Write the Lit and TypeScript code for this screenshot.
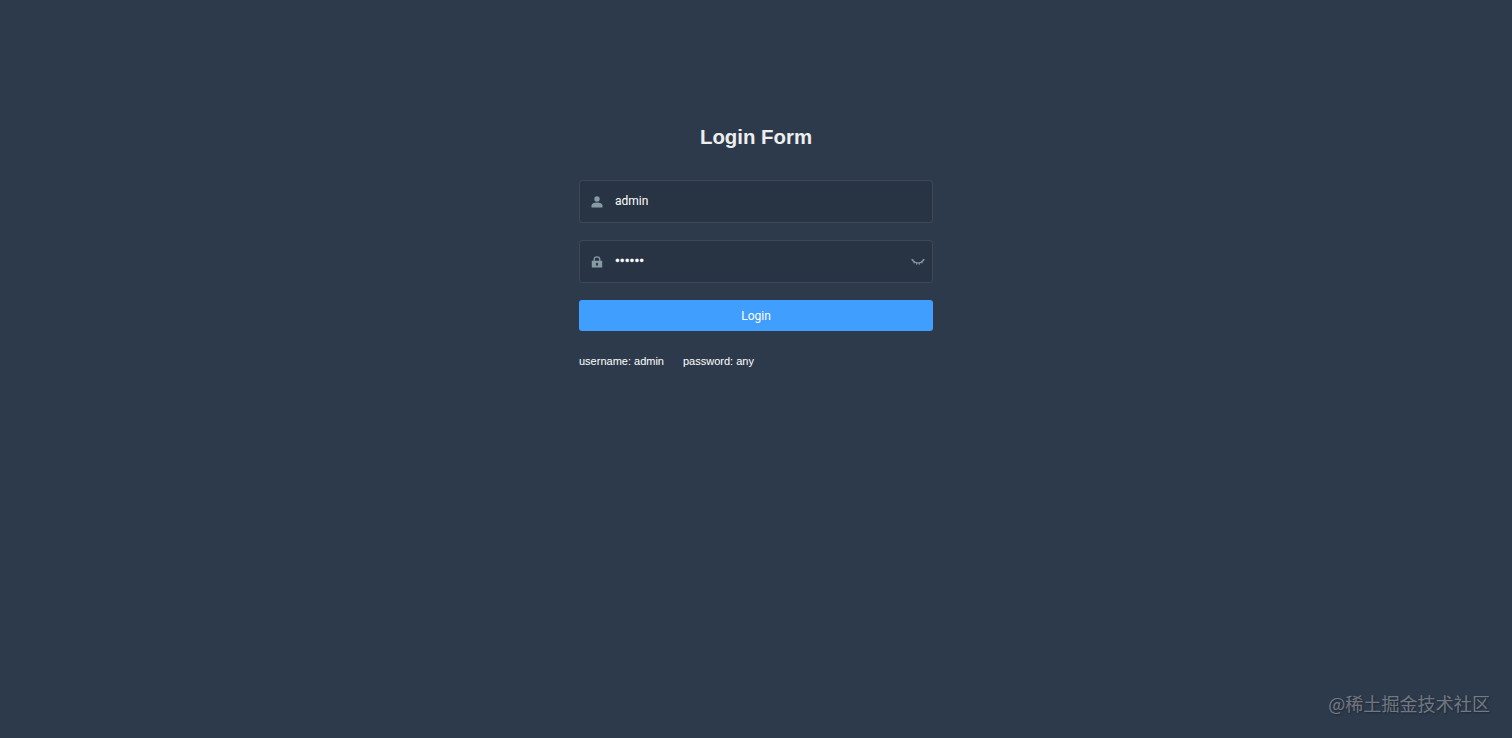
import { LitElement, html, css } from "lit";
import { customElement } from "lit/decorators.js";

@customElement("app-root")
export class AppRoot extends LitElement {
  static styles = css`
    :host { display: block; }
    .page {
      position: relative;
      box-sizing: border-box;
      height: 738px;
      overflow: hidden;
      background: #2d3a4b;
      display: flex;
      flex-direction: column;
      align-items: center;
      padding-top: 125px;
      font-family: "Liberation Sans", Arial, sans-serif;
    }
    .form { width: 354px; display: flex; flex-direction: column; }
    h3 {
      margin: 0 0 31px;
      height: 24px;
      line-height: 24px;
      text-align: center;
      color: #eee;
      font-size: 20.4px;
      font-weight: 700;
    }
    .field {
      box-sizing: border-box;
      height: 43px;
      margin-bottom: 17px;
      display: flex;
      align-items: center;
      background: #283443;
      border: 1px solid rgba(255,255,255,.1);
      border-radius: 4px;
      color: #fff;
      font: 12px Roboto, sans-serif;
    }
    .icon { width: 12px; height: 12px; margin-left: 11px; flex: none; display: block; }
    .value { margin-left: 12px; flex: 1; line-height: 14px; padding-bottom: 1px; }
    .dots { font-size: 14.4px; padding-bottom: 0; -webkit-text-stroke: .4px #fff; }
    .eye { margin: 0 7px 0 0; width: 14px; height: 14px; flex: none; display: block; }
    .btn {
      height: 31px;
      display: flex;
      align-items: center;
      justify-content: center;
      background: #409eff;
      border-radius: 3px;
      color: #fff;
      font: 12px Roboto, sans-serif;
      margin-bottom: 23px;
    }
    .tips { display: flex; color: #fff; font-size: 11px; line-height: 15px; }
    .tips span:first-child { margin-right: 19px; }
    .mark {
      position: absolute;
      right: 22px;
      bottom: 23px;
      color: rgba(255,255,255,.36);
      font: 18.1px "Noto Sans CJK SC", sans-serif;
      line-height: 24px;
      text-shadow: 1px 1px 2px rgba(0,0,0,.35);
    }
  `;

  render() {
    return html`
      <div class="page">
        <div class="form">
          <h3>Login Form</h3>
          <div class="field">
            <svg class="icon" viewBox="0 0 12 12" fill="#889aa4">
              <circle cx="6" cy="3" r="2.7"></circle>
              <path d="M.5 11.5V9.6C.5 7.6 3 6.6 6 6.6s5.5 1 5.5 3v1.9z"></path>
            </svg>
            <span class="value">admin</span>
          </div>
          <div class="field">
            <svg class="icon" viewBox="0 0 12 12">
              <path fill="none" stroke="#889aa4" stroke-width="1.3" d="M3.2 5V3.2C3.2 1.7 4.4.8 6 .8s2.8.9 2.8 2.4V5"></path>
              <path fill="#889aa4" fill-rule="evenodd" d="M.8 4.8h10.4v6.7H.8zM6 6.8a1.2 1.2 0 0 0-.6 2.2v1h1.2V9A1.2 1.2 0 0 0 6 6.8z"></path>
            </svg>
            <span class="value dots">••••••</span>
            <svg class="eye" viewBox="0 0 14 14" fill="none" stroke="#889aa4" stroke-width="1.2">
              <path d="M1 5C3 7 5 8 7 8s4-1 6-3"></path>
              <path d="M.5 4.5 2.5 5M13.5 4.5 11.5 5M3.4 6.8 2.8 8.2M5.8 7.8 5.6 9.6M8.2 7.8 8.4 9.6M10.6 6.8 11.2 8.2"></path>
            </svg>
          </div>
          <div class="btn">Login</div>
          <div class="tips"><span>username: admin</span><span>password: any</span></div>
        </div>
        <div class="mark">@稀土掘金技术社区</div>
      </div>
    `;
  }
}
